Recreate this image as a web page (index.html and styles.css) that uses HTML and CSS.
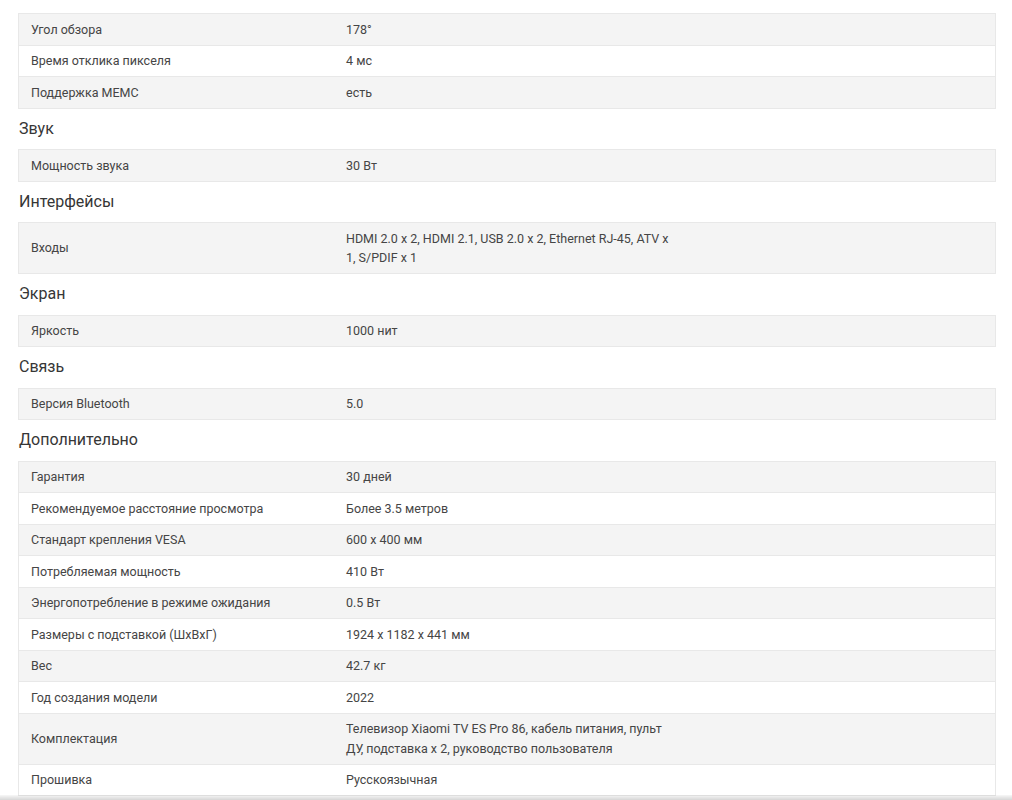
FILE: index.html
```html
<!DOCTYPE html>
<html lang="ru">
<head>
<meta charset="utf-8">
<link rel="stylesheet" href="styles.css">
</head>
<body>
<div class="specs">
  <div class="table">
    <div class="row"><div class="k">Угол обзора</div><div class="v">178°</div></div>
    <div class="row"><div class="k">Время отклика пикселя</div><div class="v">4 мс</div></div>
    <div class="row"><div class="k">Поддержка MEMC</div><div class="v">есть</div></div>
  </div>
  <h3 class="title">Звук</h3>
  <div class="table">
    <div class="row"><div class="k">Мощность звука</div><div class="v">30 Вт</div></div>
  </div>
  <h3 class="title">Интерфейсы</h3>
  <div class="table">
    <div class="row"><div class="k">Входы</div><div class="v">HDMI 2.0 x 2, HDMI 2.1, USB 2.0 x 2, Ethernet RJ-45, ATV x 1, S/PDIF x 1</div></div>
  </div>
  <h3 class="title">Экран</h3>
  <div class="table">
    <div class="row"><div class="k">Яркость</div><div class="v">1000 нит</div></div>
  </div>
  <h3 class="title">Связь</h3>
  <div class="table">
    <div class="row"><div class="k">Версия Bluetooth</div><div class="v">5.0</div></div>
  </div>
  <h3 class="title">Дополнительно</h3>
  <div class="table">
    <div class="row"><div class="k">Гарантия</div><div class="v">30 дней</div></div>
    <div class="row"><div class="k">Рекомендуемое расстояние просмотра</div><div class="v">Более 3.5 метров</div></div>
    <div class="row"><div class="k">Стандарт крепления VESA</div><div class="v">600 x 400 мм</div></div>
    <div class="row"><div class="k">Потребляемая мощность</div><div class="v">410 Вт</div></div>
    <div class="row"><div class="k">Энергопотребление в режиме ожидания</div><div class="v">0.5 Вт</div></div>
    <div class="row"><div class="k">Размеры с подставкой (ШхВхГ)</div><div class="v">1924 x 1182 x 441 мм</div></div>
    <div class="row"><div class="k">Вес</div><div class="v">42.7 кг</div></div>
    <div class="row"><div class="k">Год создания модели</div><div class="v">2022</div></div>
    <div class="row"><div class="k">Комплектация</div><div class="v">Телевизор Xiaomi TV ES Pro 86, кабель питания, пульт ДУ, подставка x 2, руководство пользователя</div></div>
    <div class="row"><div class="k">Прошивка</div><div class="v">Русскоязычная</div></div>
  </div>
</div>
<div class="bottom-shade"></div>
</body>
</html>
```
FILE: styles.css
```css
html, body {
  margin: 0;
  padding: 0;
  background: #fff;
}
body {
  font-family: Roboto, "Liberation Sans", sans-serif;
  color: #454545;
  overflow: hidden;
  height: 800px;
}
.specs {
  padding: 13px 16px 0 18px;
}
.table {
  border: 1px solid #e8e8e8;
  border-bottom: none;
}
.row {
  display: grid;
  grid-template-columns: 327px 330px 1fr;
  border-bottom: 1px solid #e8e8e8;
  font-size: 12.5px;
  line-height: 19.5px;
  background: #fff;
}
.row:nth-child(odd) {
  background: #f4f4f4;
}
.k {
  padding: 5.5px 12px;
  display: flex;
  align-items: center;
}
.v {
  padding: 5.5px 0;
}
.title {
  margin: 0;
  padding: 10.25px 0 10.25px 1px;
  font-size: 16px;
  line-height: 20px;
  font-weight: 400;
  color: #363636;
}
.bottom-shade {
  position: fixed;
  left: 0;
  right: 0;
  bottom: 0;
  height: 5px;
  background: linear-gradient(to bottom, rgba(0,0,0,0.03), rgba(0,0,0,0.16));
}
```
